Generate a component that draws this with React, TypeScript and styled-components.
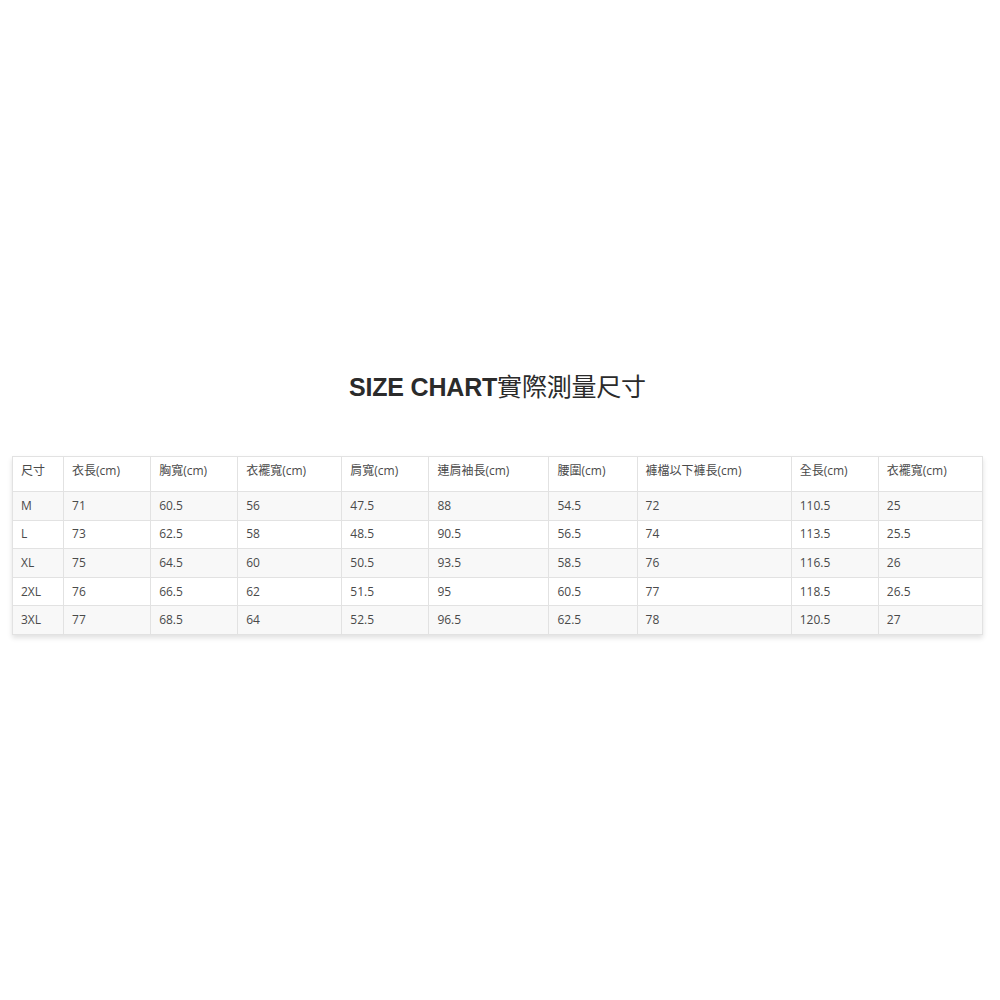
import React from 'react'
import styled, { createGlobalStyle } from 'styled-components'

const GlobalStyle = createGlobalStyle`
  html, body {
    margin: 0;
    padding: 0;
    background: #ffffff;
  }
`

const Page = styled.div`
  box-sizing: border-box;
  width: 1000px;
  min-height: 1000px;
  padding: 372px 17px 0 12px;
  font-family: "Open Sans", "Noto Sans CJK TC", sans-serif;
`

const Title = styled.h2`
  margin: 0 0 54px;
  height: 30px;
  line-height: 30px;
  text-align: center;
  font-family: "Liberation Sans", "Noto Sans CJK TC", sans-serif;
  font-size: 25px;
  font-weight: 700;
  color: #2b2b2b;
  letter-spacing: -0.2px;

  span {
    font-weight: 400;
  }
`

const Table = styled.table`
  width: 100%;
  border-collapse: collapse;
  table-layout: fixed;
  box-shadow: 0 3px 5px rgba(0, 0, 0, 0.12);
`

const Cell = styled.td<{ $head?: boolean }>`
  box-sizing: border-box;
  border: 1px solid #e2e2e2;
  padding: ${(p) => (p.$head ? '5px 8px 10px' : '0 8px')};
  height: ${(p) => (p.$head ? '35px' : '28.6px')};
  vertical-align: ${(p) => (p.$head ? 'top' : 'middle')};
  font-size: 12px;
  line-height: 18px;
  color: #4a4a4a;
  text-align: left;
  white-space: nowrap;
  overflow: hidden;
`

const Row = styled.tr<{ $shade?: boolean }>`
  background: ${(p) => (p.$shade ? '#f8f8f8' : '#ffffff')};
`

const widths = [51, 87, 87, 104, 87, 120, 88, 154, 87, 104]

const headers = [
  '尺寸',
  '衣長(cm)',
  '胸寬(cm)',
  '衣襬寬(cm)',
  '肩寬(cm)',
  '連肩袖長(cm)',
  '腰圍(cm)',
  '褲檔以下褲長(cm)',
  '全長(cm)',
  '衣襬寬(cm)',
]

const rows = [
  ['M', '71', '60.5', '56', '47.5', '88', '54.5', '72', '110.5', '25'],
  ['L', '73', '62.5', '58', '48.5', '90.5', '56.5', '74', '113.5', '25.5'],
  ['XL', '75', '64.5', '60', '50.5', '93.5', '58.5', '76', '116.5', '26'],
  ['2XL', '76', '66.5', '62', '51.5', '95', '60.5', '77', '118.5', '26.5'],
  ['3XL', '77', '68.5', '64', '52.5', '96.5', '62.5', '78', '120.5', '27'],
]

const App: React.FC = () => {
  return (
    <>
      <GlobalStyle />
      <Page>
        <Title>
          SIZE CHART<span>實際測量尺寸</span>
        </Title>
        <Table>
          <colgroup>
            {widths.map((w, i) => (
              <col key={i} style={{ width: w }} />
            ))}
          </colgroup>
          <tbody>
            <Row>
              {headers.map((h, i) => (
                <Cell key={i} $head>
                  {h}
                </Cell>
              ))}
            </Row>
            {rows.map((r, ri) => (
              <Row key={ri} $shade={ri % 2 === 0}>
                {r.map((c, ci) => (
                  <Cell key={ci}>{c}</Cell>
                ))}
              </Row>
            ))}
          </tbody>
        </Table>
      </Page>
    </>
  )
}

export default App
